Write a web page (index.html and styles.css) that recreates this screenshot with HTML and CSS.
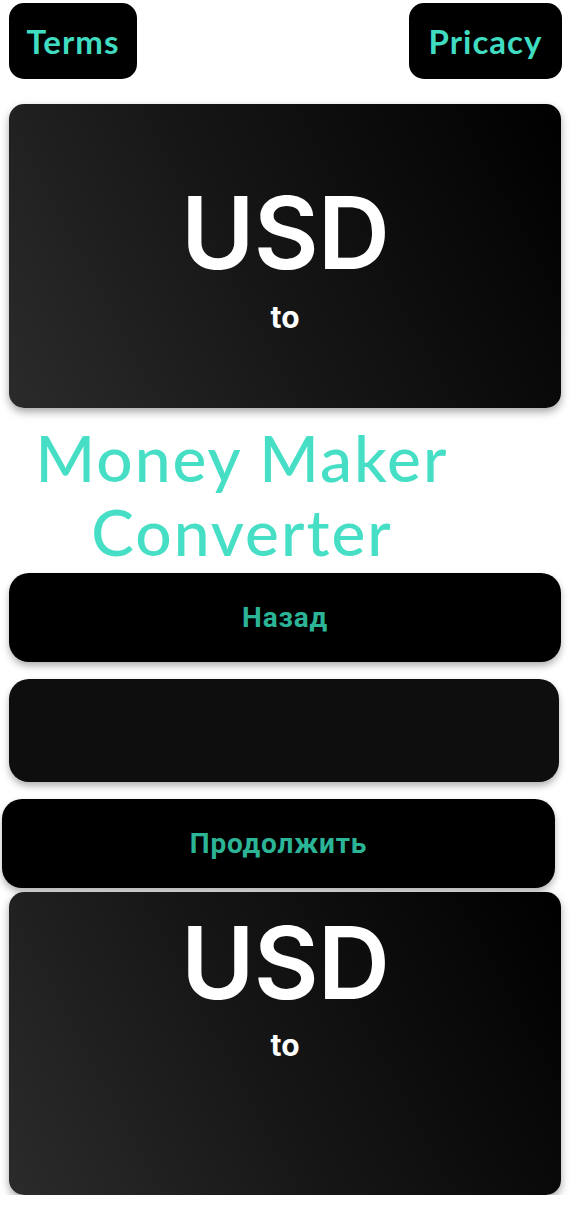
FILE: index.html
```html
<!DOCTYPE html>
<html lang="ru">
<head>
<meta charset="utf-8">
<title>Money Maker Converter</title>
<link rel="stylesheet" href="styles.css">
</head>
<body>
<div class="page">
  <div class="top-row">
    <a class="pill pill-terms" href="#">Terms</a>
    <a class="pill pill-privacy" href="#">Pricacy</a>
  </div>
  <div class="card card-first">
    <div class="currency">USD</div>
    <div class="to">to</div>
  </div>
  <h1 class="title">Money Maker<br>Converter</h1>
  <button class="btn btn-back">Назад</button>
  <div class="field"></div>
  <button class="btn btn-next">Продолжить</button>
  <div class="card card-second">
    <div class="currency">USD</div>
    <div class="to">to</div>
  </div>
</div>
</body>
</html>
```

FILE: styles.css
```css
html, body {
  margin: 0;
  padding: 0;
  background: #ffffff;
}

.page {
  width: 571px;
  display: flex;
  flex-direction: column;
  padding-top: 3px;
}

.top-row {
  display: flex;
  justify-content: space-between;
  padding: 0 9px 0 9px;
}

.pill {
  height: 76px;
  background: #000;
  border-radius: 15px;
  display: flex;
  align-items: center;
  justify-content: center;
  color: #3fdcc1;
  font-family: "Lato", "Open Sans", sans-serif;
  font-weight: 700;
  font-size: 33px;
  letter-spacing: 1px;
  text-decoration: none;
}

.pill-terms { width: 128px; }
.pill-privacy { width: 153px; }

.card {
  margin-left: 9px;
  width: 552px;
  height: 304px;
  border-radius: 15px;
  background: linear-gradient(62deg, #2b2b2b 0%, #161616 45%, #000 100%);
  box-shadow: 0 4px 8px rgba(0, 0, 0, 0.35);
  display: flex;
  flex-direction: column;
  align-items: center;
  color: #fff;
  font-family: "Inter", "Liberation Sans", sans-serif;
  box-sizing: border-box;
}

.card-first {
  margin-top: 25px;
  padding-top: 79px;
}

.card-second {
  margin-top: 4px;
  height: 303px;
  padding-top: 21px;
}

.currency {
  font-size: 100px;
  font-weight: 600;
  line-height: 1;
  letter-spacing: -1px;
}

.to {
  margin-top: 19px;
  font-size: 30px;
  font-weight: 700;
  line-height: 1;
}

.card-second .to {
  margin-top: 17px;
}

.title {
  margin: 13px 0 0 0;
  width: 484px;
  text-align: center;
  color: #46dfc6;
  font-family: "Lato", "Open Sans", sans-serif;
  font-weight: 500;
  font-size: 64px;
  letter-spacing: 2px;
  line-height: 74px;
}

.btn {
  border: none;
  background: #000;
  border-radius: 20px;
  height: 89px;
  color: #2cb497;
  font-family: "Roboto", "Noto Sans", sans-serif;
  font-weight: 700;
  font-size: 28px;
  letter-spacing: 0.8px;
  box-shadow: 0 4px 7px rgba(0, 0, 0, 0.3);
  padding: 0;
}

.btn-back {
  margin: 4px 0 0 9px;
  width: 552px;
}

.field {
  margin: 17px 0 0 9px;
  width: 550px;
  height: 103px;
  border-radius: 20px;
  background: #0e0e0e;
  box-shadow: 0 4px 7px rgba(0, 0, 0, 0.3);
}

.btn-next {
  margin: 17px 0 0 2px;
  width: 553px;
}
```
